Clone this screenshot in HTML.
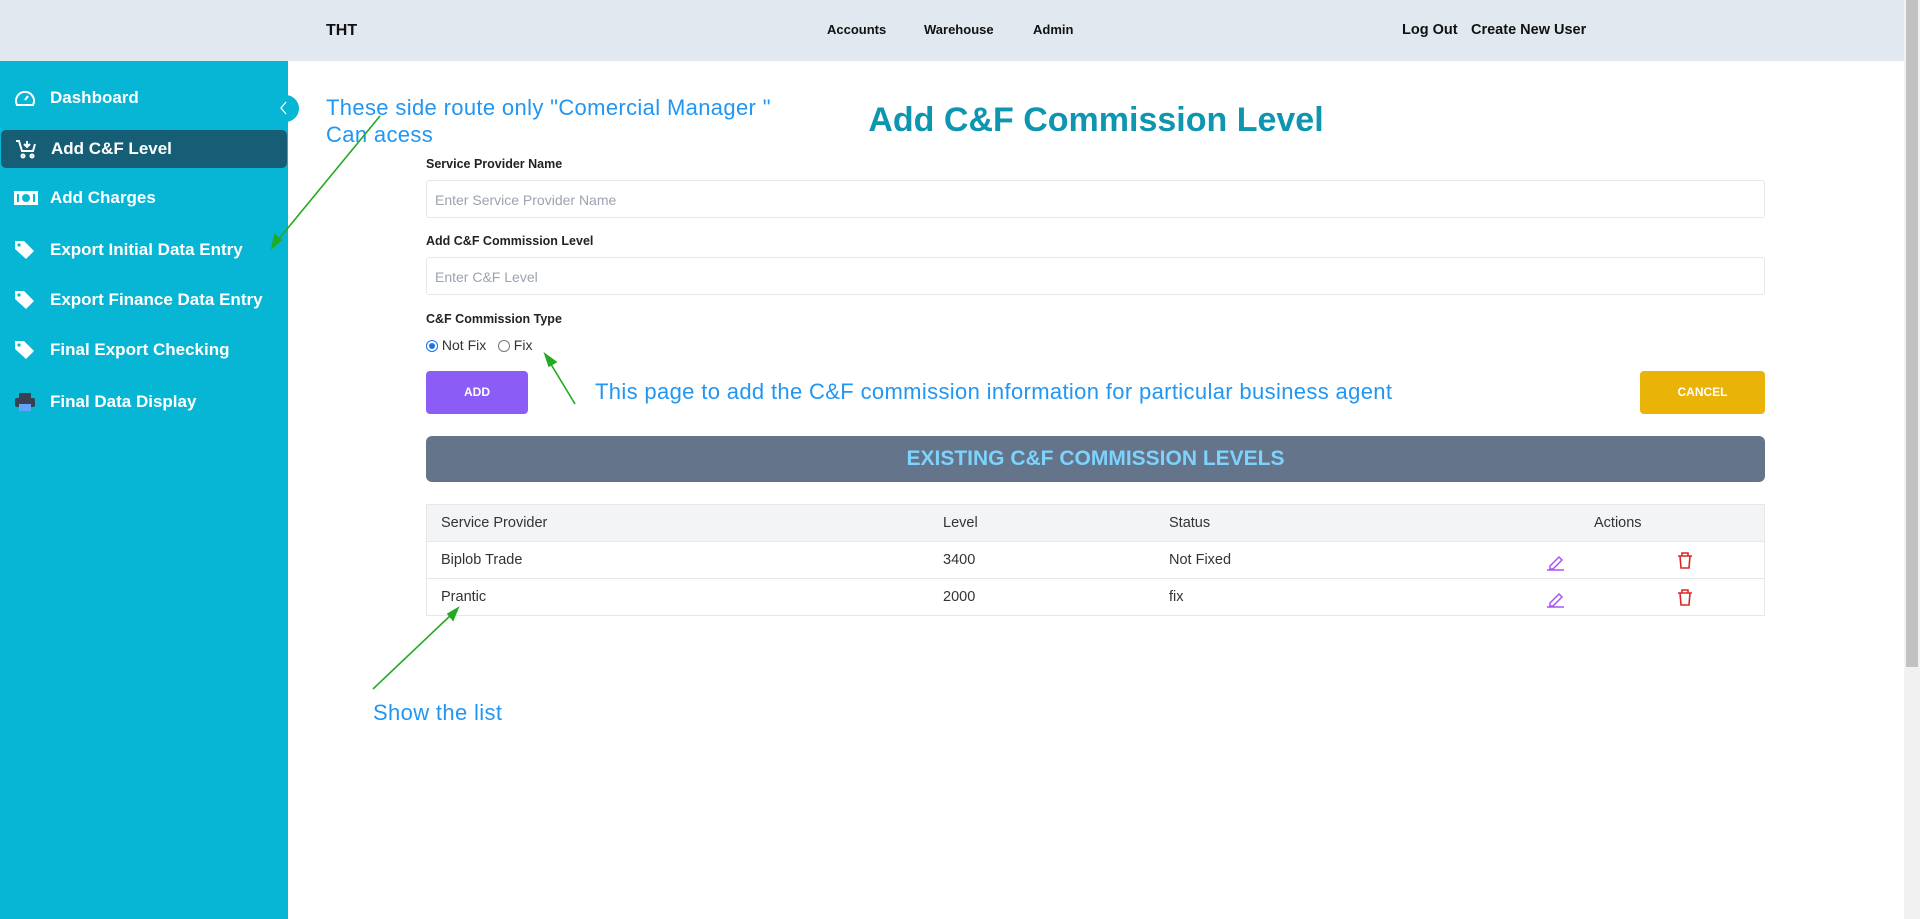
<!DOCTYPE html>
<html><head><meta charset="utf-8"><style>
*{box-sizing:border-box;margin:0;padding:0}
body{width:1920px;height:919px;overflow:hidden;background:#fff;font-family:"Liberation Sans",sans-serif;position:relative;color:#1f2937}
.abs{position:absolute}
.hdr{left:0;top:0;width:1904px;height:61px;background:#e2e8f0}
.hdr span{position:absolute;top:22px;font-size:14.5px;font-weight:bold;color:#111}
.side{left:0;top:61px;width:288px;height:858px;background:#06b6d4}
.item{position:absolute;left:0;width:288px;height:38px;color:#fff;font-weight:bold;font-size:17px;line-height:38px;padding-left:50px}
.item svg{position:absolute;left:14px;top:9px}
.ann{color:#2196f3;font-size:22px;position:absolute;letter-spacing:0.35px}
.lbl{position:absolute;left:426px;font-size:12.5px;font-weight:bold;color:#222}
.inp{position:absolute;left:426px;width:1339px;height:38px;border:1px solid #e5e7eb;border-radius:3px;font-size:14px;color:#9ca3af;padding:11px 8px}
.tbl{position:absolute;left:426px;top:504px;width:1339px;height:112px;border:1px solid #e5e7eb}
.row{position:absolute;left:0;width:1337px;height:37px;border-bottom:1px solid #e5e7eb;font-size:14.5px;line-height:37px;color:#333}
.row span{position:absolute}
.sb{left:1904px;top:0;width:16px;height:919px;background:#f1f1f1}
</style></head><body>
<div class="abs hdr">
<span style="left:326px;font-size:16px">THT</span>
<span style="left:827px;font-size:13px">Accounts</span>
<span style="left:924px;font-size:13px">Warehouse</span>
<span style="left:1033px;font-size:13px">Admin</span>
<span style="left:1402px">Log Out</span>
<span style="left:1471px">Create New User</span>
</div>
<div class="abs side">
<div class="item" style="top:18px"><svg width="22" height="20" viewBox="0 0 22 20" fill="none" stroke="#fff" stroke-width="2"><path d="M3 17A9 9 0 1 1 19 17Z"/><path d="M11 12l3-4" /></svg>Dashboard</div>
<div class="item" style="top:69px;left:1px;width:286px;background:#155e75;border-radius:5px"><svg width="22" height="20" viewBox="0 0 22 20" fill="none" stroke="#fff" stroke-width="2"><path d="M1 2h3l3 10h11l2-7"/><circle cx="8" cy="17" r="1.5"/><circle cx="17" cy="17" r="1.5"/><path d="M12 2v6M9 5l3 3 3-3"/></svg>Add C&amp;F Level</div>
<div class="item" style="top:118px"><svg width="24" height="20" viewBox="0 0 24 20"><rect x="0" y="3" width="24" height="14" fill="#fff"/><circle cx="12" cy="10" r="4" fill="#06b6d4"/><rect x="3" y="6" width="2" height="8" fill="#06b6d4"/><rect x="19" y="6" width="2" height="8" fill="#06b6d4"/></svg>Add Charges</div>
<div class="item" style="top:170px"><svg width="22" height="20" viewBox="0 0 22 20"><path d="M1 1h9l10 10-8 8L1 9Z" fill="#fff"/><circle cx="5" cy="5" r="1.6" fill="#06b6d4"/></svg>Export Initial Data Entry</div>
<div class="item" style="top:220px"><svg width="22" height="20" viewBox="0 0 22 20"><path d="M1 1h9l10 10-8 8L1 9Z" fill="#fff"/><circle cx="5" cy="5" r="1.6" fill="#06b6d4"/></svg>Export Finance Data Entry</div>
<div class="item" style="top:270px"><svg width="22" height="20" viewBox="0 0 22 20"><path d="M1 1h9l10 10-8 8L1 9Z" fill="#fff"/><circle cx="5" cy="5" r="1.6" fill="#06b6d4"/></svg>Final Export Checking</div>
<div class="item" style="top:322px"><svg width="22" height="20" viewBox="0 0 22 20"><rect x="5" y="1" width="12" height="5" fill="#374151"/><rect x="1" y="6" width="20" height="9" rx="2" fill="#374151"/><rect x="5" y="12" width="12" height="7" fill="#60a5fa"/></svg>Final Data Display</div>
</div>
<div class="abs" style="left:272px;top:95px;width:27px;height:27px;border-radius:50%;background:#06b6d4"></div>
<svg class="abs" style="left:278px;top:100px" width="12" height="16" viewBox="0 0 12 16"><path d="M8 2L3 8l5 6" stroke="#fff" stroke-width="1.3" fill="none"/></svg>
<div class="ann" style="left:326px;top:95px">These side route only "Comercial Manager "</div>
<div class="ann" style="left:326px;top:122px">Can acess</div>
<div class="abs" style="left:0;width:2192px;top:101px;text-align:center;font-size:34px;font-weight:bold;color:#0e95b0">Add C&amp;F Commission Level</div>
<div class="lbl" style="top:157px">Service Provider Name</div>
<div class="inp" style="top:180px">Enter Service Provider Name</div>
<div class="lbl" style="top:234px">Add C&amp;F Commission Level</div>
<div class="inp" style="top:257px">Enter C&amp;F Level</div>
<div class="lbl" style="top:312px">C&amp;F Commission Type</div>
<div class="abs" style="left:426px;top:337px;font-size:14px;color:#333">
<span style="display:inline-block;width:12px;height:12px;border-radius:50%;border:1px solid #1a73e8;vertical-align:-2px;position:relative"><span style="position:absolute;left:2px;top:2px;width:6px;height:6px;border-radius:50%;background:#1a73e8"></span></span> Not Fix &nbsp;&nbsp;<span style="display:inline-block;width:12px;height:12px;border-radius:50%;border:1px solid #777;vertical-align:-2px"></span> Fix</div>
<div class="abs" style="left:426px;top:371px;width:102px;height:43px;background:#8b5cf6;border-radius:4px;color:#fff;font-weight:bold;font-size:12px;text-align:center;line-height:43px">ADD</div>
<div class="ann" style="left:595px;top:379px">This page to add the C&amp;F commission information for particular business agent</div>
<div class="abs" style="left:1640px;top:371px;width:125px;height:43px;background:#eab308;border-radius:4px;color:#fff;font-weight:bold;font-size:12px;text-align:center;line-height:43px">CANCEL</div>
<div class="abs" style="left:426px;top:436px;width:1339px;height:46px;background:#64748b;border-radius:6px;color:#7dd3fc;font-weight:bold;font-size:21px;text-align:center;line-height:46px">EXISTING C&amp;F COMMISSION LEVELS</div>
<div class="tbl">
<div class="row" style="top:0;background:#f3f4f6"><span style="left:14px">Service Provider</span><span style="left:516px">Level</span><span style="left:742px">Status</span><span style="left:1167px">Actions</span></div>
<div class="row" style="top:37px"><span style="left:14px">Biplob Trade</span><span style="left:516px">3400</span><span style="left:742px">Not Fixed</span></div>
<div class="row" style="top:74px;border-bottom:none"><span style="left:14px">Prantic</span><span style="left:516px">2000</span><span style="left:742px">fix</span></div>
</div>
<svg class="abs" style="left:0;top:0" width="1904" height="919">
<g stroke="#a855f7" stroke-width="1.5" fill="none"><path d="M1550 566l9-9 3 3-9 9h-3z M1547 570h17"/><path d="M1550 603l9-9 3 3-9 9h-3z M1547 607h17"/></g>
<g stroke="#dc2626" stroke-width="1.6" fill="none"><path d="M1678 556h14M1682 556v-3h6v3M1680 556l1 12h8l1-12"/><path d="M1678 593h14M1682 593v-3h6v3M1680 593l1 12h8l1-12"/></g>
<g stroke="#22aa22" stroke-width="1.6" fill="#22aa22">
<line x1="380" y1="116" x2="278" y2="240"/><path d="M272 248l3-13 6 5z"/>
<line x1="575" y1="404" x2="549" y2="361"/><path d="M545 354l11 8-7 4z"/>
<line x1="373" y1="689" x2="452" y2="614"/><path d="M458 608l-5 12-5-6z"/>
</g>
</svg>
<div class="ann" style="left:373px;top:700px">Show the list</div>
<div class="abs sb"><div style="position:absolute;left:2px;top:0;width:12px;height:667px;background:#c1c1c1"></div></div>
</body></html>
